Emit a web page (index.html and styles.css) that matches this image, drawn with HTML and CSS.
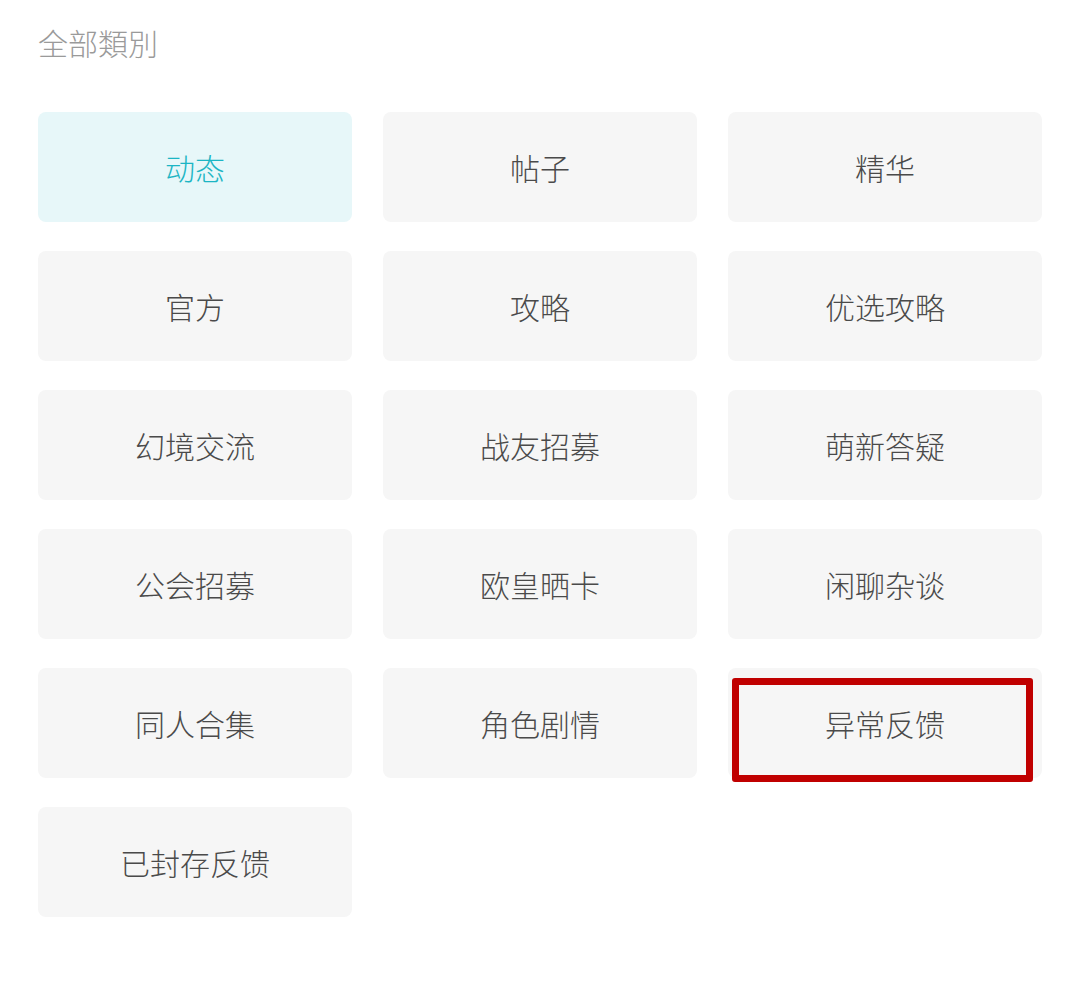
FILE: index.html
```html
<!DOCTYPE html>
<html lang="zh">
<head>
<meta charset="utf-8">
<link rel="stylesheet" href="styles.css">
</head>
<body>
<div class="page">
  <div class="title">全部類別</div>
  <div class="grid">
    <div class="tile active">动态</div>
    <div class="tile">帖子</div>
    <div class="tile">精华</div>
    <div class="tile">官方</div>
    <div class="tile">攻略</div>
    <div class="tile">优选攻略</div>
    <div class="tile">幻境交流</div>
    <div class="tile">战友招募</div>
    <div class="tile">萌新答疑</div>
    <div class="tile">公会招募</div>
    <div class="tile">欧皇晒卡</div>
    <div class="tile">闲聊杂谈</div>
    <div class="tile">同人合集</div>
    <div class="tile">角色剧情</div>
    <div class="tile marked">异常反馈<span class="highlight"></span></div>
    <div class="tile">已封存反馈</div>
  </div>
</div>
</body>
</html>
```
FILE: styles.css
```css
html, body {
  margin: 0;
  padding: 0;
  background: #ffffff;
}
.page {
  padding: 23px 38px 0 38px;
  font-family: "Noto Sans CJK SC", "Noto Sans", sans-serif;
}
.title {
  font-size: 30px;
  font-weight: 300;
  line-height: 38px;
  color: #9a9a9a;
  margin-bottom: 51px;
}
.grid {
  display: grid;
  grid-template-columns: repeat(3, 314px);
  grid-auto-rows: 110px;
  column-gap: 31px;
  row-gap: 29px;
}
.tile {
  position: relative;
  background: #f6f6f6;
  border-radius: 8px;
  display: flex;
  align-items: center;
  justify-content: center;
  font-size: 30px;
  font-weight: 300;
  color: #4a4a4a;
}
.tile.active {
  background: #e7f7f9;
  color: #1cb5c4;
}
.highlight {
  position: absolute;
  left: 4px;
  top: 10px;
  width: 301px;
  height: 104px;
  box-sizing: border-box;
  border: 7px solid #c00000;
  border-radius: 3px;
}
```
